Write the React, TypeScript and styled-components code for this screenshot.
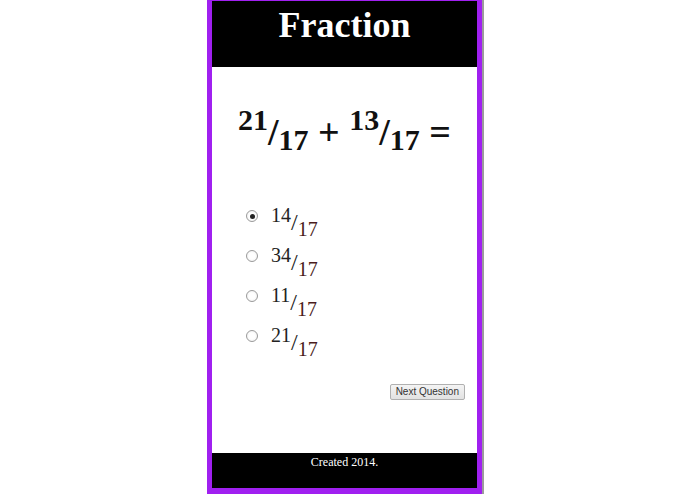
import React, { useState } from 'react'
import styled, { createGlobalStyle } from 'styled-components'

const GlobalStyle = createGlobalStyle`
  html, body {
    margin: 0;
    padding: 0;
    background: #fff;
  }
  body {
    font-family: 'Liberation Serif', 'Times New Roman', serif;
  }
`

const choices = [
  { num: 14, den: 17 },
  { num: 34, den: 17 },
  { num: 11, den: 17 },
  { num: 21, den: 17 },
]

const Page = styled.div`
  display: flex;
  justify-content: center;
  padding-right: 6px;
`

const Frame = styled.div`
  width: 265px;
  border: 5px solid #a020f0;
  border-top-width: 1px;
  border-bottom-width: 6px;
  box-shadow: 2px 0 0 #9c9c9c;
  display: flex;
  flex-direction: column;
`

const Header = styled.header`
  background: #000;
  height: 66px;
  box-sizing: border-box;
  padding-top: 4px;
  text-align: center;
`

const Title = styled.h1`
  margin: 0;
  color: #fff;
  font-size: 36px;
  line-height: 40px;
  font-weight: bold;
`

const Main = styled.main`
  height: 386px;
  background: #fff;
  display: flex;
  flex-direction: column;
`

const Equation = styled.h2`
  margin: 43px 0 0;
  text-align: center;
  font-size: 38px;
  line-height: 44px;
  font-weight: bold;
  color: #111;
`

const Sup = styled.sup<{ $size: number; $lift: number; $color?: string }>`
  font-size: ${({ $size }) => $size}px;
  line-height: 0;
  vertical-align: ${({ $lift }) => $lift}px;
  color: ${({ $color }) => $color || 'inherit'};
`

const Sub = styled.sub<{ $size: number; $drop: number; $color?: string }>`
  font-size: ${({ $size }) => $size}px;
  line-height: 0;
  vertical-align: ${({ $drop }) => -$drop}px;
  color: ${({ $color }) => $color || 'inherit'};
`

const Options = styled.div`
  margin-top: 48px;
  padding-left: 34px;
  display: flex;
  flex-direction: column;
`

const Option = styled.label`
  display: flex;
  align-items: flex-start;
  height: 40px;
  cursor: pointer;
`

const Radio = styled.input`
  appearance: none;
  margin: 8px 13px 0 0;
  width: 12px;
  height: 12px;
  border-radius: 50%;
  border: 1px solid #9a9a9a;
  background: radial-gradient(circle, #fff 40%, #ececec 100%);
  box-sizing: border-box;
  position: relative;
  flex: none;
  &:checked::after {
    content: '';
    position: absolute;
    left: 2.5px;
    top: 2.5px;
    width: 5px;
    height: 5px;
    border-radius: 50%;
    background: #222;
  }
`

const Fraction = styled.span`
  font-size: 24px;
  line-height: 40px;
  color: #222;
`

const Actions = styled.div`
  margin-top: 22px;
  display: flex;
  justify-content: flex-end;
  padding-right: 12px;
`

const Button = styled.button`
  height: 16px;
  padding: 0 5px;
  font-family: 'Liberation Sans', Arial, sans-serif;
  font-size: 10px;
  line-height: 14px;
  color: #333;
  background: linear-gradient(#f4f4f4, #e2e2e2);
  border: 1px solid #b0b0b0;
  border-radius: 2px;
`

const Footer = styled.footer`
  background: #000;
  height: 35px;
  text-align: center;
  color: #fff;
  font-size: 12px;
  line-height: 18px;
`

export default function App() {
  const [picked, setPicked] = useState(0)

  return (
    <Page>
      <GlobalStyle />
      <Frame>
        <Header>
          <Title>Fraction</Title>
        </Header>
        <Main>
          <Equation>
            <Sup $size={30} $lift={15}>21</Sup>/<Sub $size={30} $drop={5}>17</Sub> +{' '}
            <Sup $size={30} $lift={15}>13</Sup>/<Sub $size={30} $drop={5}>17</Sub> =
          </Equation>
          <Options>
            {choices.map((c, i) => (
              <Option key={i}>
                <Radio
                  type="radio"
                  name="answer"
                  checked={picked === i}
                  onChange={() => setPicked(i)}
                />
                <Fraction>
                  <Sup $size={20} $lift={8}>{c.num}</Sup>/
                  <Sub $size={20} $drop={6} $color="#4a1c1c">{c.den}</Sub>
                </Fraction>
              </Option>
            ))}
          </Options>
          <Actions>
            <Button>Next Question</Button>
          </Actions>
        </Main>
        <Footer>Created 2014.</Footer>
      </Frame>
    </Page>
  )
}
